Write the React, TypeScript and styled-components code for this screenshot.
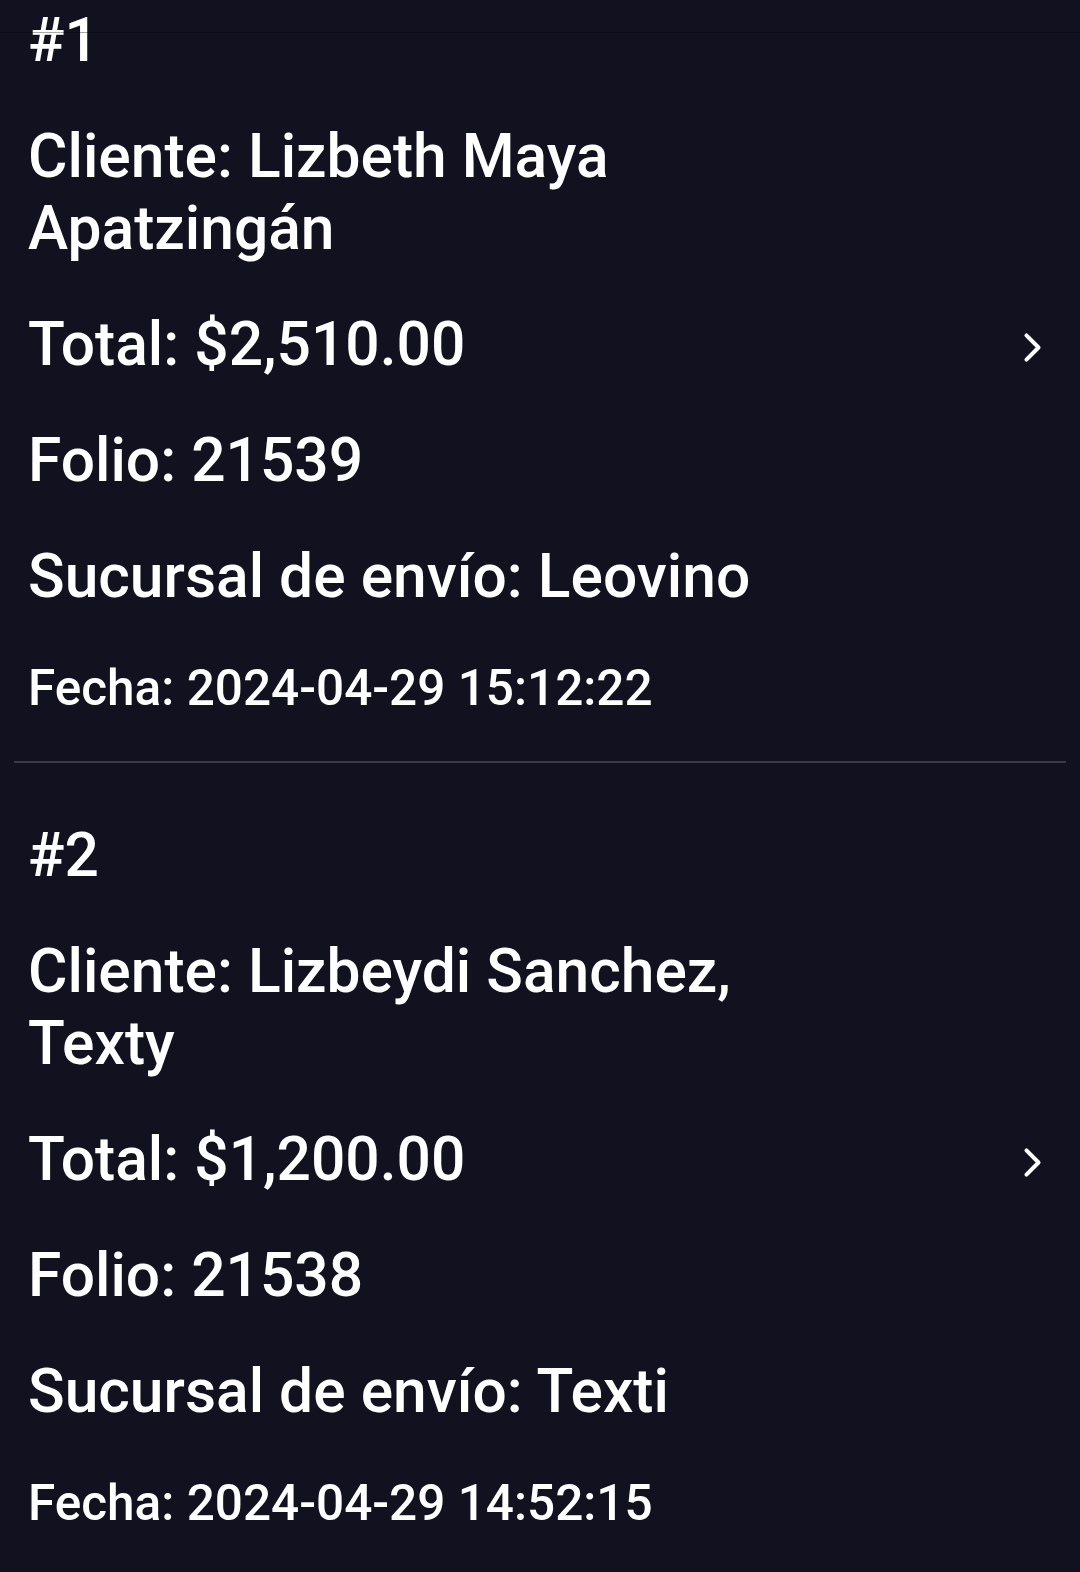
import React from 'react'
import styled, { createGlobalStyle } from 'styled-components'

const GlobalStyle = createGlobalStyle`
  html, body {
    margin: 0;
    padding: 0;
    background: #11111f;
  }
  body {
    font-family: Roboto, "Noto Sans", "Liberation Sans", sans-serif;
    color: #ffffff;
    overflow: hidden;
  }
`

const Viewport = styled.div`
  position: relative;
  width: 1080px;
  height: 1572px;
  overflow: hidden;
  background: #11111f;
`

// thin edge of the toolbar the list is scrolled under
const HeaderEdge = styled.div`
  position: absolute;
  left: 0;
  right: 0;
  top: 32px;
  height: 1px;
  background: rgba(0, 0, 0, 0.35);
`

// list is scrolled down a bit, like in the capture
const List = styled.div`
  margin-top: -52px;
`

const Card = styled.div`
  display: flex;
  flex-direction: column;
  gap: 44px;
  margin: 0 14px;
  padding: 57px 12px 44px 14px;
  border-bottom: 2px solid #393a4a;
`

const Line = styled.div<{ small?: boolean }>`
  font-size: ${(p) => (p.small ? '49.5px' : '60.5px')};
  font-weight: 500;
  line-height: ${(p) => (p.small ? '58px' : '72px')};
  max-width: 780px;
  margin-top: ${(p) => (p.small ? '2px' : '0')};
`

const TotalRow = styled.div`
  display: flex;
  align-items: center;
  justify-content: space-between;
`

const Chevron = styled.svg`
  width: 43px;
  height: 43px;
  flex-shrink: 0;
  fill: none;
  stroke: #ffffff;
  stroke-width: 48px;
  stroke-linecap: round;
  stroke-linejoin: round;
  margin-top: 4px;
`

interface Order {
  n: number
  cliente: string
  total: string
  folio: string
  sucursal: string
  fecha: string
}

const orders: Order[] = [
  {
    n: 1,
    cliente: 'Lizbeth Maya Apatzingán',
    total: '$2,510.00',
    folio: '21539',
    sucursal: 'Leovino',
    fecha: '2024-04-29 15:12:22',
  },
  {
    n: 2,
    cliente: 'Lizbeydi Sanchez, Texty',
    total: '$1,200.00',
    folio: '21538',
    sucursal: 'Texti',
    fecha: '2024-04-29 14:52:15',
  },
]

const OrderCard = ({ order }: { order: Order }) => (
  <Card>
    <Line>#{order.n}</Line>
    <Line>Cliente: {order.cliente}</Line>
    <TotalRow>
      <Line>Total: {order.total}</Line>
      <Chevron viewBox="0 0 512 512">
        <polyline points="184 112 328 256 184 400" />
      </Chevron>
    </TotalRow>
    <Line>Folio: {order.folio}</Line>
    <Line>Sucursal de envío: {order.sucursal}</Line>
    <Line small>Fecha: {order.fecha}</Line>
  </Card>
)

export default function App() {
  return (
    <Viewport>
      <GlobalStyle />
      <List>
        {orders.map((o) => (
          <OrderCard key={o.n} order={o} />
        ))}
      </List>
      <HeaderEdge />
    </Viewport>
  )
}
